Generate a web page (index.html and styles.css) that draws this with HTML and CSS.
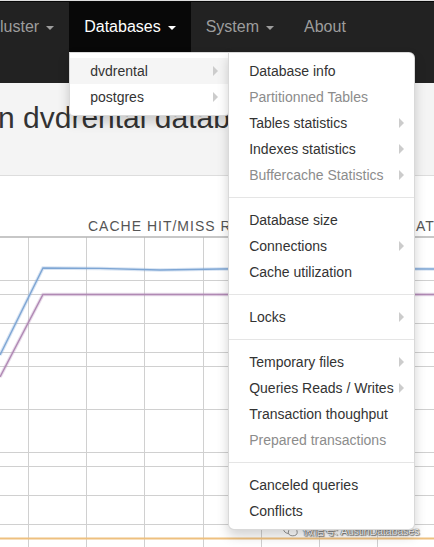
FILE: index.html
```html
<!DOCTYPE html>
<html lang="en">
<head>
<meta charset="utf-8">
<title>Databases</title>
<link rel="stylesheet" href="styles.css">
</head>
<body>
<div class="topline"></div>
<nav class="navbar">
  <ul class="nav">
    <li class="nav-item first"><a>Cluster<b class="caret"></b></a></li>
    <li class="nav-item active"><a>Databases<b class="caret"></b></a>
      <ul class="dropdown">
        <li class="sub hover"><a><span>dvdrental</span><span class="arrow"></span></a>
          <ul class="dropdown submenu">
            <li><a><span>Database info</span></a></li>
            <li class="disabled"><a><span>Partitionned Tables</span></a></li>
            <li><a><span>Tables statistics</span><span class="arrow"></span></a></li>
            <li><a><span>Indexes statistics</span><span class="arrow"></span></a></li>
            <li class="disabled"><a><span>Buffercache Statistics</span><span class="arrow"></span></a></li>
            <li class="divider"></li>
            <li><a><span>Database size</span></a></li>
            <li><a><span>Connections</span><span class="arrow"></span></a></li>
            <li><a><span>Cache utilization</span></a></li>
            <li class="divider"></li>
            <li><a><span>Locks</span><span class="arrow"></span></a></li>
            <li class="divider"></li>
            <li><a><span>Temporary files</span><span class="arrow"></span></a></li>
            <li><a><span>Queries Reads / Writes</span><span class="arrow"></span></a></li>
            <li><a><span>Transaction thoughput</span></a></li>
            <li class="disabled"><a><span>Prepared transactions</span></a></li>
            <li class="divider"></li>
            <li><a><span>Canceled queries</span></a></li>
            <li><a><span>Conflicts</span></a></li>
          </ul>
        </li>
        <li class="sub"><a><span>postgres</span><span class="arrow"></span></a></li>
      </ul>
    </li>
    <li class="nav-item"><a>System<b class="caret"></b></a></li>
    <li class="nav-item"><a>About</a></li>
  </ul>
</nav>
<header class="jumbo">
  <h1><span class="lead">Statistics o</span>n dvdrental database</h1>
</header>
<section class="chart">
  <div class="chart-title"><span class="t1">CACHE HIT/MISS RATIO</span><span class="t2">ATIO</span></div>
  <svg class="plot" width="434" height="311" viewBox="0 0 434 311">
    <g class="grid">
      <line x1="0" y1="44.5" x2="434" y2="44.5"/>
      <line x1="0" y1="58.5" x2="434" y2="58.5"/>
      <line x1="0" y1="87.5" x2="434" y2="87.5"/>
      <line x1="0" y1="116.5" x2="434" y2="116.5"/>
      <line x1="0" y1="130.5" x2="434" y2="130.5"/>
      <line x1="0" y1="173.5" x2="434" y2="173.5"/>
      <line x1="0" y1="216.5" x2="434" y2="216.5"/>
      <line x1="0" y1="230.5" x2="434" y2="230.5"/>
      <line x1="0" y1="259.5" x2="434" y2="259.5"/>
      <line x1="0" y1="288.5" x2="434" y2="288.5"/>
      <line x1="28.5" y1="1" x2="28.5" y2="311"/>
      <line x1="86.5" y1="1" x2="86.5" y2="311"/>
      <line x1="144.5" y1="1" x2="144.5" y2="311"/>
      <line x1="203.5" y1="1" x2="203.5" y2="311"/>
      <line x1="261.5" y1="1" x2="261.5" y2="311"/>
      <line x1="319.5" y1="1" x2="319.5" y2="311"/>
      <line x1="377.5" y1="1" x2="377.5" y2="311"/>
    </g>
    <line class="axis" x1="0" y1="1" x2="434" y2="1"/>
    <line class="orange" x1="0" y1="302.5" x2="434" y2="302.5"/>
    <polyline class="halo-blue" points="0,119 43,32 100,32.4 160,34 220,33 300,32.6 434,33"/>
    <polyline class="blue" points="0,119 43,32 100,32.4 160,34 220,33 300,32.6 434,33"/>
    <polyline class="halo-purple" points="0,141 43,58.5 434,58.5"/>
    <polyline class="purple" points="0,141 43,58.5 434,58.5"/>
  </svg>
  <div class="watermark">
    <svg class="wx" width="15" height="13" viewBox="0 0 15 13">
      <ellipse cx="5.8" cy="5.2" rx="5.2" ry="4.3"/>
      <ellipse cx="9.8" cy="8.2" rx="4.4" ry="3.6"/>
    </svg>
    <span>微信号: AustinDatabases</span>
  </div>
</section>
</body>
</html>
```

FILE: styles.css
```css
html, body {
  margin: 0;
  padding: 0;
}

body {
  width: 434px;
  height: 547px;
  overflow: hidden;
  background: #fff;
  font-family: "Liberation Sans", Arial, sans-serif;
  color: #333;
}

.topline {
  height: 1px;
  background: #dedede;
}

.navbar {
  background: #222;
  border-top: 1px solid #080808;
  height: 81px;
  position: relative;
  z-index: 5;
}

.nav {
  display: flex;
  list-style: none;
  margin: 0;
  padding: 0;
}

.nav-item {
  position: relative;
  flex-shrink: 0;
}

.nav-item.first {
  margin-left: -26.5px;
}

.nav-item > a {
  display: block;
  padding: 15px;
  line-height: 20px;
  font-size: 16px;
  color: #9d9d9d;
  white-space: nowrap;
}

.nav-item.active > a {
  background: #080808;
  color: #fff;
}

.caret {
  display: inline-block;
  width: 0;
  height: 0;
  margin-left: 7px;
  vertical-align: middle;
  border-top: 4px solid;
  border-left: 4px solid transparent;
  border-right: 4px solid transparent;
}

.dropdown {
  position: absolute;
  top: 100%;
  left: 0;
  z-index: 10;
  min-width: 160px;
  box-sizing: border-box;
  margin: 0;
  padding: 5px 0;
  list-style: none;
  background: #fff;
  border: 1px solid rgba(0, 0, 0, 0.15);
  border-radius: 0 0 4px 4px;
  box-shadow: 0 6px 12px rgba(0, 0, 0, 0.175);
  font-size: 14px;
}

.dropdown li {
  position: relative;
}

.dropdown a {
  display: flex;
  justify-content: space-between;
  align-items: center;
  padding: 3px 20px;
  line-height: 20px;
  color: #333;
  white-space: nowrap;
}

.dropdown li.hover > a {
  background: #f5f5f5;
}

.dropdown li.disabled > a {
  color: #8c8c8c;
}

.arrow {
  flex-shrink: 0;
  width: 0;
  height: 0;
  margin-right: -10px;
  border-style: solid;
  border-width: 5px 0 5px 5px;
  border-color: transparent transparent transparent #ccc;
}

.divider {
  height: 1px;
  margin: 9px 0;
  background: #e5e5e5;
}

.submenu {
  top: 0;
  left: 100%;
  width: 187px;
  margin-top: -6px;
  border-radius: 0 6px 6px 6px;
}

.jumbo {
  background: #f4f4f4;
  padding: 18px 0 40px;
  border-bottom: 1px solid #ddd;
  white-space: nowrap;
}

.jumbo h1 {
  margin: 0 0 0 -2px;
  font-size: 30px;
  font-weight: normal;
  line-height: 34px;
  color: #333;
}

.lead {
  display: inline-block;
  width: 0;
  direction: rtl;
  white-space: nowrap;
}

.chart {
  position: relative;
  padding-top: 42px;
}

.chart-title {
  display: flex;
  height: 16px;
  line-height: 16px;
  margin-bottom: 2px;
  padding-left: 88px;
  font-size: 14px;
  letter-spacing: 1px;
  color: #555;
  white-space: nowrap;
  overflow: hidden;
}

.chart-title .t1 {
  flex: 0 0 328px;
}

.plot {
  display: block;
}

.grid line {
  stroke: #d0d0d0;
  stroke-width: 1;
}

.axis {
  stroke: #b4b4b4;
  stroke-width: 1.5;
}

.orange {
  stroke: #eec07f;
  stroke-width: 2;
}

.halo-blue {
  fill: none;
  stroke: rgba(125, 165, 215, 0.3);
  stroke-width: 3.5;
}

.blue {
  fill: none;
  stroke: #7ea6d4;
  stroke-width: 1.4;
}

.halo-purple {
  fill: none;
  stroke: rgba(180, 140, 185, 0.3);
  stroke-width: 3.5;
}

.purple {
  fill: none;
  stroke: #b089b4;
  stroke-width: 1.4;
}

.watermark {
  position: absolute;
  left: 283px;
  top: 346px;
  display: flex;
  align-items: center;
  gap: 5px;
  font-family: "Liberation Sans", "Noto Sans CJK SC", sans-serif;
  font-size: 11px;
  letter-spacing: -0.3px;
  color: #fff;
  text-shadow: 0 0 1px #555, 0 0 1px #555, 1px 1px 1px #777;
}

.wx ellipse {
  fill: #fff;
  stroke: #888;
  stroke-width: 0.9;
}
```
